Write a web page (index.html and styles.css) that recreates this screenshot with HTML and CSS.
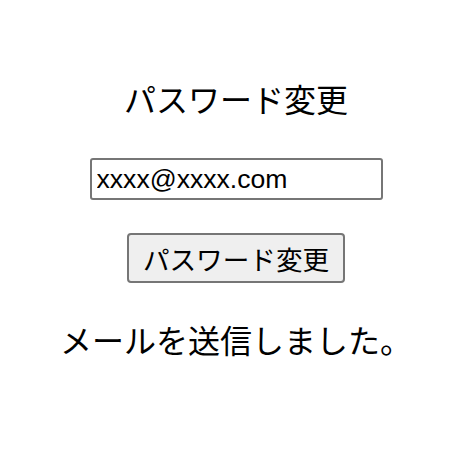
FILE: index.html
```html
<!DOCTYPE html>
<html lang="ja">
<head>
<meta charset="utf-8">
<link rel="stylesheet" href="styles.css">
</head>
<body>
<main class="page">
  <h1 class="title">パスワード変更</h1>
  <input class="email" type="text" value="xxxx@xxxx.com">
  <button class="submit" type="button">パスワード変更</button>
  <p class="message">メールを送信しました。</p>
</main>
</body>
</html>
```
FILE: styles.css
```css
html, body {
  margin: 0;
  padding: 0;
  background: #fff;
}
body {
  font-family: "Liberation Sans", "Noto Sans CJK JP", sans-serif;
  color: #000;
}
.page {
  display: flex;
  flex-direction: column;
  align-items: center;
  padding-top: 80px;
  padding-left: 14px;
}
.title {
  margin: 0;
  font-size: 32px;
  font-weight: normal;
  line-height: 42px;
}
.email {
  margin-top: 36px;
  box-sizing: border-box;
  width: 293px;
  height: 42px;
  font-family: "Liberation Sans", "Noto Sans CJK JP", sans-serif;
  font-size: 26.6px;
  padding: 0 5px;
  border: 2px solid #767676;
  border-radius: 3px;
  color: #000;
}
.submit {
  margin-top: 33px;
  box-sizing: border-box;
  width: 218px;
  height: 50px;
  font-family: "Liberation Sans", "Noto Sans CJK JP", sans-serif;
  font-size: 26.6px;
  background: #efefef;
  border: 2px solid #767676;
  border-radius: 4px;
  color: #000;
  padding: 0;
}
.message {
  margin: 38px 0 0;
  font-size: 32px;
  line-height: 42px;
}
```
